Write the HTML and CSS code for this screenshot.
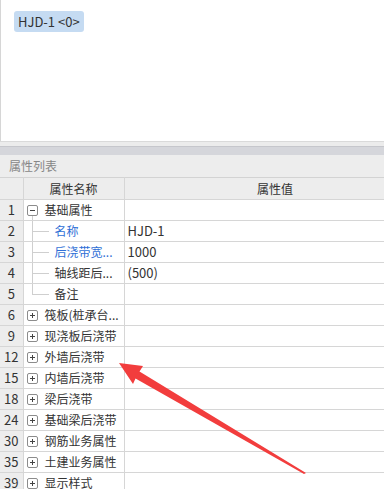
FILE: index.html
```html
<!DOCTYPE html>
<html lang="zh-CN">
<head>
<meta charset="utf-8">
<title>属性列表</title>
<link rel="stylesheet" href="styles.css">
</head>
<body>
<div class="page">
  <div class="top">
    <span class="tag">HJD-1 &lt;0&gt;</span>
  </div>
  <div class="split1"></div>
  <div class="split2"></div>
  <div class="panel-title">属性列表</div>
  <div class="grid-wrap">
    <table class="grid">
      <colgroup><col class="c-num"><col class="c-name"><col class="c-val"></colgroup>
      <thead>
        <tr><th class="num"></th><th>属性名称</th><th>属性值</th></tr>
      </thead>
      <tbody>
        <tr><td class="num">1</td><td class="name parent open"><span class="tog minus"></span>基础属性</td><td class="val"></td></tr>
        <tr><td class="num">2</td><td class="name child blue">名称</td><td class="val">HJD-1</td></tr>
        <tr><td class="num">3</td><td class="name child blue">后浇带宽...</td><td class="val">1000</td></tr>
        <tr><td class="num">4</td><td class="name child">轴线距后...</td><td class="val">(500)</td></tr>
        <tr><td class="num">5</td><td class="name child last">备注</td><td class="val"></td></tr>
        <tr><td class="num">6</td><td class="name parent"><span class="tog"></span>筏板(桩承台...</td><td class="val"></td></tr>
        <tr><td class="num">9</td><td class="name parent"><span class="tog"></span>现浇板后浇带</td><td class="val"></td></tr>
        <tr><td class="num">12</td><td class="name parent"><span class="tog"></span>外墙后浇带</td><td class="val"></td></tr>
        <tr><td class="num">15</td><td class="name parent"><span class="tog"></span>内墙后浇带</td><td class="val"></td></tr>
        <tr><td class="num">18</td><td class="name parent"><span class="tog"></span>梁后浇带</td><td class="val"></td></tr>
        <tr><td class="num">24</td><td class="name parent"><span class="tog"></span>基础梁后浇带</td><td class="val"></td></tr>
        <tr><td class="num">30</td><td class="name parent"><span class="tog"></span>钢筋业务属性</td><td class="val"></td></tr>
        <tr><td class="num">35</td><td class="name parent"><span class="tog"></span>土建业务属性</td><td class="val"></td></tr>
        <tr><td class="num">39</td><td class="name parent"><span class="tog"></span>显示样式</td><td class="val"></td></tr>
      </tbody>
    </table>
  </div>
  <svg class="arrow" width="384" height="489" viewBox="0 0 384 489">
    <polygon points="119,363 143,366 139.5,371.5 306,473 304,474 135.5,378.5 133,384" fill="#f23d3d"/>
  </svg>
</div>
</body>
</html>
```

FILE: styles.css
```css
html, body {
  margin: 0;
  padding: 0;
  background: #ffffff;
}
body {
  font-family: "Noto Sans CJK SC", "Noto Sans", sans-serif;
  font-size: 12px;
  color: #333333;
}
.page {
  position: relative;
  width: 384px;
  height: 489px;
  overflow: hidden;
}
.top {
  height: 130px;
  padding: 11px 0 0 13px;
  border-left: 1px solid #d6d6d6;
  box-sizing: content-box;
}
.tag {
  display: inline-block;
  height: 21px;
  line-height: 21px;
  padding: 0 4px;
  background: #c5dbf2;
  border-radius: 3px;
  font-size: 13px;
  color: #333333;
}
.split1 {
  height: 4px;
  border-top: 1px solid #dadada;
  background: #ececec;
}
.split2 {
  height: 8px;
  border-top: 1px solid #c6c7cc;
  background: #d5d6db;
}
.panel-title {
  height: 22px;
  line-height: 22px;
  padding-left: 9px;
  background: #ededed;
  color: #878787;
  font-size: 12px;
}
.grid-wrap {
  width: 384px;
  overflow: hidden;
}
.grid {
  width: 426px;
  table-layout: fixed;
  border-collapse: collapse;
  border-top: 1px solid #d3d3d3;
}
.c-num { width: 23px; }
.c-name { width: 101px; }
.c-val { width: 302px; }
.grid th, .grid td {
  border-right: 1px solid #d6d6d6;
  border-bottom: 1px solid #d6d6d6;
  padding: 0;
  white-space: nowrap;
  overflow: hidden;
}
.grid th {
  height: 21px;
  background: #ededed;
  font-weight: normal;
  text-align: center;
  color: #333333;
}
.grid td {
  height: 20px;
  line-height: 20px;
}
.grid td.num, .grid th.num {
  background: #ededed;
  text-align: center;
  color: #333333;
  font-size: 13px;
}
.grid td.val {
  padding-left: 3px;
  font-size: 13px;
}
.name.parent {
  padding-left: 3px;
}
.name.open {
  background: linear-gradient(#cfcfcf, #cfcfcf) 8px 16px / 1px 4px no-repeat;
}
.name.child {
  padding-left: 31px;
  background:
    linear-gradient(#cfcfcf, #cfcfcf) 8px 0 / 1px 100% no-repeat,
    linear-gradient(#cfcfcf, #cfcfcf) 9px 10px / 16px 1px no-repeat;
}
.name.child.last {
  background:
    linear-gradient(#cfcfcf, #cfcfcf) 8px 0 / 1px 11px no-repeat,
    linear-gradient(#cfcfcf, #cfcfcf) 9px 10px / 16px 1px no-repeat;
}
.blue {
  color: #2f6fd6;
}
.tog {
  position: relative;
  display: inline-block;
  width: 9px;
  height: 9px;
  border: 1px solid #8c8c8c;
  border-radius: 2px;
  background: #ffffff;
  margin-right: 7px;
  vertical-align: -1px;
}
.tog::before {
  content: "";
  position: absolute;
  left: 2px;
  top: 4px;
  width: 5px;
  height: 1px;
  background: #444444;
}
.tog::after {
  content: "";
  position: absolute;
  left: 4px;
  top: 2px;
  width: 1px;
  height: 5px;
  background: #444444;
}
.tog.minus::after {
  display: none;
}
.arrow {
  position: absolute;
  left: 0;
  top: 0;
  pointer-events: none;
}
```
